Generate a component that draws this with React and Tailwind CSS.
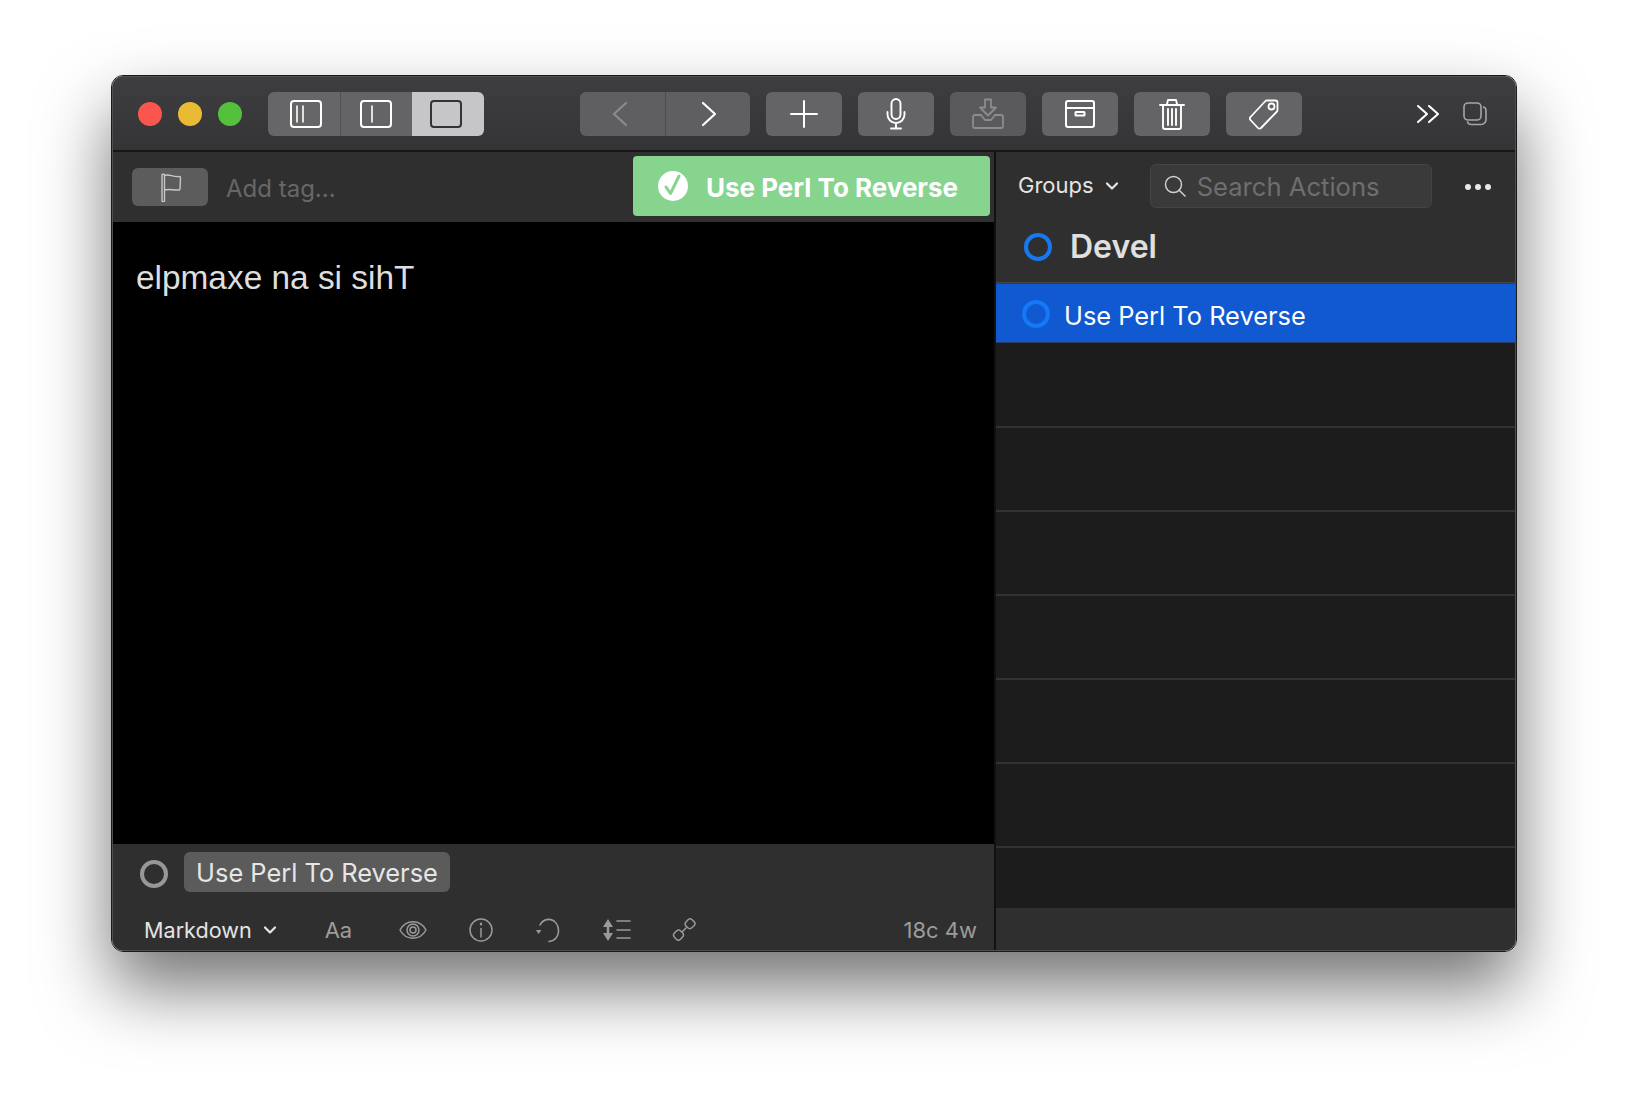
const sans = "font-['Inter','Liberation_Sans',sans-serif]";

function S({ w = 32, h = 32, vb, children, className = "", sw = 2, color = "#fff" }) {
  return (
    <svg width={w} height={h} viewBox={vb || `0 0 ${w} ${h}`} fill="none" stroke={color} strokeWidth={sw} strokeLinecap="round" strokeLinejoin="round" className={className}>
      {children}
    </svg>
  );
}

function Btn({ children, className = "bg-[#646466]" }) {
  return <div className={`flex h-11 w-[76px] shrink-0 items-center justify-center rounded-md ${className}`}>{children}</div>;
}

function Ring({ color, size = "h-7 w-7" }) {
  return <span className={`block shrink-0 rounded-full border-[4.5px] ${size} ${color}`} />;
}

const Chevron = ({ c = "#e5e5e5" }) => (
  <S w={14} h={10} sw={2.2} color={c}><path d="M2 2.5l5 5 5-5" /></S>
);

function TitleBar() {
  return (
    <div className="flex h-[75px] shrink-0 items-center border-b-2 border-b-[#161616] bg-gradient-to-b from-[#3e3e40] to-[#343436] pl-[25px]">
      <div className="flex gap-4">
        <span className="h-6 w-6 rounded-full bg-[#fb5550]" />
        <span className="h-6 w-6 rounded-full bg-[#e9bb35]" />
        <span className="h-6 w-6 rounded-full bg-[#54c13d]" />
      </div>
      <div className="ml-[26px] flex h-11 w-[216px] overflow-hidden rounded-md">
        <div className="flex w-[73px] items-center justify-center border-r border-r-[#505052] bg-[#666668] pl-1">
          <S w={32} h={28}>
            <rect x="1" y="1" width="30" height="26" rx="3" />
            <path d="M7 6v16M13 6v16" strokeWidth="1.6" />
          </S>
        </div>
        <div className="flex w-[71px] items-center justify-center bg-[#646466] pr-[1px]">
          <S w={32} h={28}>
            <rect x="1" y="1" width="30" height="26" rx="3" />
            <path d="M12 6v16" strokeWidth="1.6" />
          </S>
        </div>
        <div className="flex w-[72px] items-center justify-center bg-[#c6c6c8] pr-1">
          <S w={32} h={28} color="#333">
            <rect x="1" y="1" width="30" height="26" rx="3" />
          </S>
        </div>
      </div>
      <div className="ml-24 flex h-11 w-[170px] overflow-hidden rounded-md bg-[#5f5f61]">
        <div className="flex w-[86px] items-center justify-center border-r border-r-[#4c4c4e] pr-[6px]">
          <S w={18} h={26} color="#8b8b8d" sw={2.2}><path d="M15 2L3 13l12 11" /></S>
        </div>
        <div className="flex flex-1 items-center justify-center pl-[2px]">
          <S w={18} h={26} sw={2.2}><path d="M3 2l12 11L3 24" /></S>
        </div>
      </div>
      <div className="ml-4 flex gap-4">
        <Btn>
          <S w={30} h={30} sw={2}><path d="M15 2v26M2 15h26" /></S>
        </Btn>
        <Btn>
          <S w={20} h={32} sw={1.9}>
            <rect x="5.5" y="1" width="9" height="20" rx="4.5" />
            <path d="M1.5 14v2.5a8.5 8.5 0 0017 0V14M10 25v5M5 30.5h10" />
          </S>
        </Btn>
        <Btn className="bg-[#5a5a5c]">
          <S w={32} h={32} sw={1.8} color="#8c8c8e">
            <path d="M13 1.500h6v8h5l-8 8-8-8h5z" />
            <path d="M9 17H3a2 2 0 00-2 2v9a2 2 0 002 2h26a2 2 0 002-2v-9a2 2 0 00-2-2h-6M9 17l4 5h6l4-5" />
          </S>
        </Btn>
        <Btn>
          <S w={30} h={28} sw={2}>
            <rect x="1" y="1" width="28" height="26" rx="2" />
            <path d="M1 8h28" />
            <rect x="10.500" y="12" width="9" height="3.500" rx=".5" />
          </S>
        </Btn>
        <Btn>
          <S w={26} h={32} sw={1.9}>
            <path d="M1 7h24M8 6l1-4h8l1 4M4 7v22a2 2 0 002 2h14a2 2 0 002-2V7M9 11v16M13 11v16M17 11v16" />
          </S>
        </Btn>
        <Btn>
          <S w={34} h={34} sw={1.8}>
            <path d="M21 3.500h7.500a2 2 0 012 2V13a3 3 0 01-1 2L14 31a2 2 0 01-3 0l-7.500-8a2 2 0 010-3L18 4.500a3 3 0 013-1z" />
            <circle cx="24.500" cy="9.500" r="3" />
          </S>
        </Btn>
      </div>
      <div className="ml-[114px] flex items-center gap-[23px]">
        <S w={24} h={20} sw={2.1}><path d="M2 2l9 8-9 8M13 2l9 8-9 8" /></S>
        <S w={24} h={24} sw={1.6} color="#a6a6a8">
          <rect x="1" y="1" width="17" height="17" rx="4" />
          <path d="M20.500 5c1.500.5 2.500 1.500 2.500 3.500v9a5 5 0 01-5 5H8.500c-2 0-3.500-1-4-2.500" />
        </S>
      </div>
    </div>
  );
}

function TagBar() {
  return (
    <div className="flex h-[70px] shrink-0 bg-[#2f2f2f] pl-[19px] pr-[4px] pt-[4px]">
      <div className="mt-3 flex h-[38px] w-[76px] items-center justify-center rounded-md bg-[#5c5c5c] pl-1">
        <S w={24} h={30} sw={1.4} color="#c8c8c8">
          <path d="M2 29V3c0-1 2.500-1 2.500 0v26c0 1-2.500 1-2.500 0zM4.500 3.500c5-2 8 2 15 1 .8 0 1 .5 1 1L20 17c0 .8-.3 1-1 1-6 .5-9-1.500-14.500 0" />
        </S>
      </div>
      <span className={`ml-[18px] mt-[15px] text-[24px] leading-9 text-[#676767] ${sans}`}>Add tag...</span>
      <div className="ml-auto flex h-[60px] w-[357px] items-center rounded bg-[#86d48e] pl-6">
        <svg width="32" height="32" viewBox="0 0 32 32">
          <circle cx="16" cy="16" r="15" fill="#fff" />
          <path d="M9 17l4.500 6.500L22 6" fill="none" stroke="#86d48e" strokeWidth="3" strokeLinecap="round" strokeLinejoin="round" />
        </svg>
        <span className={`ml-[17px] mt-[2px] text-[26px] font-bold text-white ${sans}`}>Use Perl To Reverse</span>
      </div>
    </div>
  );
}

function BottomBar() {
  const grey = "#9a9a9a";
  return (
    <div className="flex h-[106px] shrink-0 flex-col bg-[#2f2f2f]">
      <div className="flex items-start pl-[27px] pt-2">
        <Ring color="border-[#979799] mt-[8px]" />
        <span className={`ml-4 flex h-10 w-[266px] items-center justify-center rounded-md bg-[#5b5b5b] pt-[2px] text-[25.4px] text-[#e6e6e6] ${sans}`}>Use Perl To Reverse</span>
      </div>
      <div className="mt-[22px] flex h-8 items-center pl-[31px] pr-[17px]">
        <span className={`text-[21.6px] text-[#e4e4e4] ${sans}`}>Markdown</span>
        <span className="ml-[11px]"><Chevron /></span>
        <span className={`ml-[48px] text-[22px] text-[#9c9c9c] ${sans}`}>Aa</span>
        <span className="ml-[47px]">
          <S w={28} h={20} sw={1.500} color={grey}>
            <path d="M1 10c6-11 20-11 26 0-6 11-20 11-26 0z" />
            <circle cx="14" cy="10" r="6" />
            <circle cx="14" cy="10" r="3" />
          </S>
        </span>
        <span className="ml-[42px]">
          <S w={24} h={24} sw={1.500} color={grey}>
            <circle cx="12" cy="12" r="11" />
            <path d="M12 10.500V19" />
            <path d="M12 5.500v1" strokeWidth="2.200" />
          </S>
        </span>
        <span className="ml-[41px]">
          <S w={28} h={26} sw={1.600} color={grey}>
            <path d="M6 8c3-6 10-7 14-4 5 4 6 12 2 17-1.500 2-4 3-7 3.500" />
            <path d="M2 13l2.500 4L7.500 13z" fill={grey} stroke="none" />
          </S>
        </span>
        <span className="ml-[41px]">
          <S w={28} h={24} sw={1.600} color={grey}>
            <path d="M5 1L0 9h10zM5 23L0 15h10z" fill={grey} stroke="none" />
            <path d="M5 8v8" strokeWidth="2.500" />
            <path d="M14 3h13M14 12h13M14 20h13" />
          </S>
        </span>
        <span className="ml-[41px]">
          <S w={24} h={24} sw={1.500} color={grey}>
            <path d="M10 14l4-4M14 4l2-2.200a3 3 0 014.200 0l1.800 1.800a3 3 0 010 4.200l-2.200 2a3 3 0 01-4 0l-1.800-1.800a3 3 0 010-4zM2.500 15l2-2a3 3 0 014.200 0l1.800 1.800a3 3 0 010 4.200l-2 2.200a3 3 0 01-4.200 0l-1.800-2a3 3 0 010-4.200z" />
          </S>
        </span>
        <span className={`ml-auto text-[22px] text-[#9c9c9c] ${sans}`}>18c 4w</span>
      </div>
    </div>
  );
}

function Right() {
  const rows = [0, 1, 2, 3, 4, 5];
  return (
    <div className="flex min-w-0 flex-1 flex-col bg-[#2f2f2f]">
      <div className="flex h-[70px] shrink-0 items-center pb-[2px] pl-[22px]">
        <span className={`-mt-[2px] text-[22px] text-[#e4e4e4] ${sans}`}>Groups</span>
        <span className="ml-[11px]"><Chevron /></span>
        <div className="ml-[31px] flex h-[44px] w-[282px] items-center rounded-md border border-[#444] bg-[#3a3a3a] pl-[13px]">
          <S w={22} h={22} sw={1.500} color="#d0d0d0"><circle cx="9.500" cy="9.500" r="8" /><path d="M15 15l6 6" /></S>
          <span className={`ml-[11px] mt-[2px] text-[25.6px] text-[#6e6e6e] ${sans}`}>Search Actions</span>
        </div>
        <div className="ml-[33px] mt-[2px] flex gap-[4px]">
          <span className="h-[6px] w-[6px] rounded-full bg-[#e8e8e8]" />
          <span className="h-[6px] w-[6px] rounded-full bg-[#e8e8e8]" />
          <span className="h-[6px] w-[6px] rounded-full bg-[#e8e8e8]" />
        </div>
      </div>
      <div className="flex h-[61px] shrink-0 items-center border-b border-b-[#454545] pb-[10px] pl-[28px]">
        <Ring color="border-[#1778f2]" />
        <span className={`ml-[18px] text-[32px] font-semibold text-[#e0e0e0] ${sans}`}>Devel</span>
      </div>
      <div className="flex h-[60px] shrink-0 items-center border-y border-y-[#2a3c63] bg-[#1059d0] pl-[26px]">
        <Ring color="border-[#1578f6] translate-y-[1px]" />
        <span className={`ml-[14px] translate-y-[3px] text-[25.4px] text-white ${sans}`}>Use Perl To Reverse</span>
      </div>
      <div className="flex-1 bg-[#1c1c1c]">
        {rows.map((r) => (
          <div key={r} className="h-[84px] border-b-2 border-b-[#333] first:h-[85px]" />
        ))}
      </div>
      <div className="h-[42px] shrink-0 bg-[#2f2f2f]" />
    </div>
  );
}

export default function App() {
  return (
    <div className="h-[1100px] w-[1628px] overflow-hidden bg-white pl-[111px] pt-[75px]">
      <div className="h-[877px] w-[1406px] rounded-[12px] border border-[#1a1a1a] shadow-[0_36px_70px_rgba(0,0,0,0.55)]">
        <div className="flex h-full flex-col overflow-hidden rounded-[11px] border border-[#505052] bg-[#2f2f2f]">
          <TitleBar />
          <div className="flex min-h-0 flex-1">
            <div className="flex w-[881px] shrink-0 flex-col border-r-2 border-r-[#111] box-content">
              <TagBar />
              <div className="min-h-0 flex-1 bg-black pl-[23px] pt-[36px]">
                <div className="text-[33.4px] leading-[40px] text-[#dedede] font-['Liberation_Sans',sans-serif]">elpmaxe na si sihT</div>
              </div>
              <BottomBar />
            </div>
            <Right />
          </div>
        </div>
      </div>
    </div>
  );
}
